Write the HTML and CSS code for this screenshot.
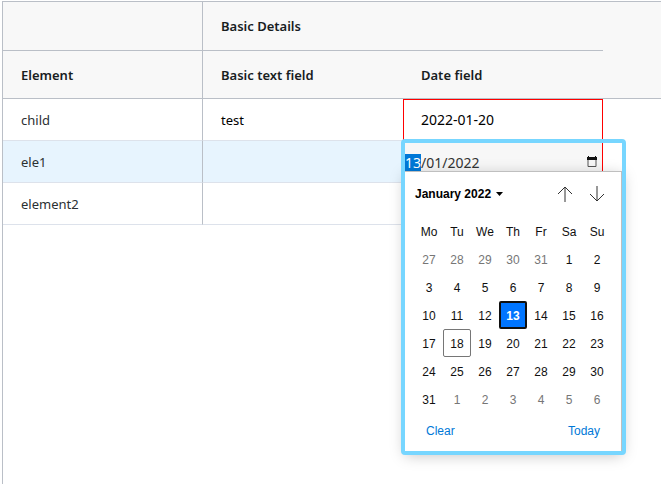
FILE: index.html
```html
<!DOCTYPE html>
<html lang="en">
<head>
<meta charset="utf-8">
<title>Elements</title>
<link rel="stylesheet" href="styles.css">
</head>
<body>
<main class="grid">
  <table class="sheet">
    <colgroup><col class="col"><col class="col"><col class="col"><col></colgroup>
    <thead>
      <tr>
        <th class="pinned"></th>
        <th colspan="2" scope="colgroup">Basic Details</th>
        <th class="filler" rowspan="2"></th>
      </tr>
      <tr>
        <th class="pinned" scope="col">Element</th>
        <th scope="col">Basic text field</th>
        <th scope="col" id="date-label">Date field</th>
      </tr>
    </thead>
    <tbody>
      <tr>
        <td class="pinned name">child</td>
        <td>test</td>
        <td class="date first">2022-01-20</td>
        <td class="filler"></td>
      </tr>
      <tr class="active">
        <td class="pinned name">ele1</td>
        <td></td>
        <td class="date editing">
          <div class="field">
            <input class="date-input" id="date" type="text" value="13/01/2022" aria-labelledby="date-label">
            <button class="picker" type="button" aria-label="Show date picker">
              <svg width="10" height="11" viewBox="0 0 10 11"><path d="M1 3.5h8v7H1z" fill="none" stroke="#555"/><path d="M0 1h1V0h1v1h6V0h1v1h1v3H0z" fill="#111"/></svg>
            </button>
          </div>
          <div class="popup">
            <div class="calendar">
              <div class="bar">
                <button class="month" type="button">January 2022 <svg width="7" height="4" viewBox="0 0 7 4"><path d="M0 0h7L3.5 4z" fill="#000"/></svg></button>
                <div class="arrows">
                  <button type="button" aria-label="Previous month"><svg width="16" height="16" viewBox="0 0 16 16"><path d="M8 16V1M1 8l7-7 7 7"/></svg></button>
                  <button type="button" aria-label="Next month"><svg width="16" height="16" viewBox="0 0 16 16"><path d="M8 0v15M1 8l7 7 7-7"/></svg></button>
                </div>
              </div>
              <table class="days">
                <thead><tr><th>Mo</th><th>Tu</th><th>We</th><th>Th</th><th>Fr</th><th>Sa</th><th>Su</th></tr></thead>
                <tbody>
                  <tr><td class="out">27</td><td class="out">28</td><td class="out">29</td><td class="out">30</td><td class="out">31</td><td>1</td><td>2</td></tr>
                  <tr><td>3</td><td>4</td><td>5</td><td>6</td><td>7</td><td>8</td><td>9</td></tr>
                  <tr><td>10</td><td>11</td><td>12</td><td class="selected">13</td><td>14</td><td>15</td><td>16</td></tr>
                  <tr><td>17</td><td class="today">18</td><td>19</td><td>20</td><td>21</td><td>22</td><td>23</td></tr>
                  <tr><td>24</td><td>25</td><td>26</td><td>27</td><td>28</td><td>29</td><td>30</td></tr>
                  <tr><td>31</td><td class="out">1</td><td class="out">2</td><td class="out">3</td><td class="out">4</td><td class="out">5</td><td class="out">6</td></tr>
                </tbody>
              </table>
              <div class="actions">
                <button type="button">Clear</button>
                <button type="button">Today</button>
              </div>
            </div>
          </div>
        </td>
        <td class="filler"></td>
      </tr>
      <tr>
        <td class="pinned name">element2</td>
        <td></td>
        <td></td>
        <td class="filler"></td>
      </tr>
    </tbody>
  </table>
</main>
<script src="script.js"></script>
</body>
</html>
```
FILE: styles.css
```css
* {
  box-sizing: border-box;
}

body {
  margin: 0;
  background: #fff;
  color: #181d1f;
  font-family: "Noto Sans", "Open Sans", sans-serif;
  font-size: 13px;
  line-height: 18px;
}

button {
  display: flex;
  align-items: center;
  padding: 0;
  border: 0;
  background: none;
  color: inherit;
  font: inherit;
}

.grid {
  min-height: calc(100vh - 1px);
  margin: 1px 0 0 2px;
  border: 1px solid #babfc7;
  border-width: 1px 0 0 1px;
}

.sheet {
  width: 100%;
  table-layout: fixed;
  border-collapse: separate;
  border-spacing: 0;
}

.col {
  width: 200px;
}

.sheet > thead > tr > th {
  height: 48px;
  padding: 0 18px;
  border-bottom: 1px solid #babfc7;
  background: #f8f8f8;
  font-weight: 600;
  text-align: left;
}

.sheet > thead > tr:first-child > th {
  height: 49px;
}

.sheet > tbody > tr > td {
  height: 42px;
  padding: 0 18px;
  border-bottom: 1px solid #dde2eb;
  color: #000;
}

.sheet > tbody > tr > .name {
  color: #2b3032;
}

.sheet > tbody > tr > .filler {
  border-bottom: 0;
}

.sheet > * > tr > .pinned {
  border-right: 1px solid #babfc7;
}

.active > td {
  background: #e7f4fe;
}

.active > .filler {
  background: #fff;
}

.sheet > tbody > tr > .date {
  padding: 0 17px;
  border-left: 1px solid #f00;
  border-right: 1px solid #f00;
  font-size: 14px;
}

.sheet > tbody > tr > .first {
  border-top: 1px solid #f00;
}

.sheet > tbody > tr > .editing {
  position: relative;
  padding: 3px 4px 0 1px;
  background: #f7f7f7;
}

.field {
  display: flex;
  align-items: center;
}

.date-input {
  flex: 1;
  min-width: 0;
  height: 18px;
  padding: 0;
  border: 0;
  outline: 0;
  background: none;
  color: #333;
  font: inherit;
  caret-color: transparent;
}

.date-input::selection {
  background: #0078d7;
  color: #fff;
}

.picker {
  margin-right: 1px;
}

.picker svg {
  margin-bottom: 3px;
}

.popup {
  position: absolute;
  z-index: 1;
  top: -2px;
  left: -3px;
  width: 225px;
  padding: 32px 4px 4px;
  pointer-events: none;
}

.popup::after {
  content: "";
  position: absolute;
  inset: 0;
  border: 4px solid #77d6ff;
  border-radius: 4px;
}

.calendar {
  padding: 7px 10px;
  border: 1px solid #bfbfbf;
  border-width: 1px 1px 0 0;
  background: #fff;
  box-shadow: 0 4px 14px rgba(0, 0, 0, 0.25);
  color: #101010;
  font-family: "Liberation Sans", Arial, sans-serif;
  font-size: 12px;
  line-height: 14px;
  pointer-events: auto;
}

.bar {
  display: flex;
  align-items: center;
  justify-content: space-between;
  height: 30px;
}

.month {
  gap: 5px;
  color: #000;
  font-weight: 700;
}

.arrows {
  display: flex;
  gap: 16px;
  padding-right: 6px;
}

.arrows path {
  fill: none;
  stroke: #333;
  stroke-width: 1;
}

.days {
  width: 196px;
  margin-top: 8px;
  table-layout: fixed;
  border-collapse: separate;
  border-spacing: 0;
}

.days th,
.days td {
  height: 28px;
  padding: 1px 0 0;
  font-weight: 400;
  text-align: center;
}

.days .out {
  color: #767676;
}

.days .selected {
  border: 2px solid #101010;
  border-radius: 2px;
  background: #0075ff;
  color: #fff;
  font-weight: 700;
}

.days .today {
  border: 1px solid #767676;
  border-radius: 2px;
}

.actions {
  display: flex;
  justify-content: space-between;
  padding: 11px 11px 6px;
  color: #0078d7;
}
```
FILE: script.js
```js
// Start editing with the day part of the date selected.
const input = document.getElementById("date");
input.focus();
input.setSelectionRange(0, 2);
```
